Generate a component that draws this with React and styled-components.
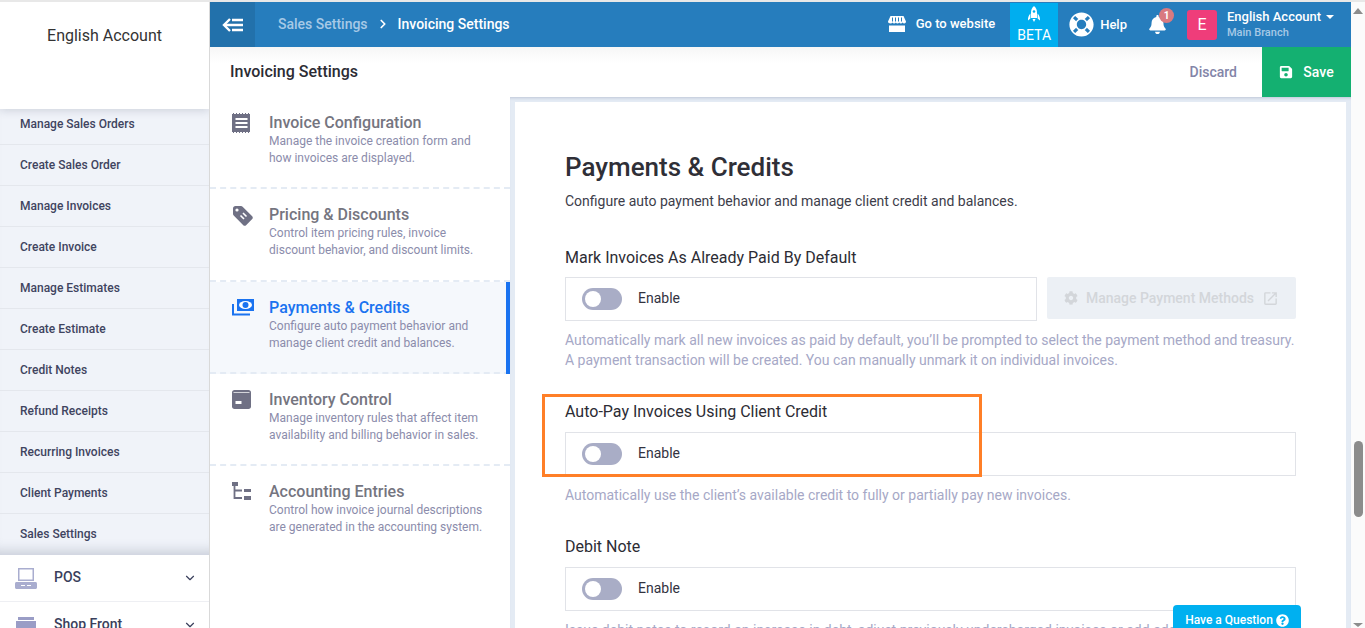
import React from "react";
import styled, { createGlobalStyle } from "styled-components";
import { FaBell, FaCog, FaLifeRing, FaQuestionCircle, FaSave } from "react-icons/fa";
import { FiChevronDown, FiChevronRight } from "react-icons/fi";
import { MdOpenInNew } from "react-icons/md";

const GlobalStyle = createGlobalStyle`
  html, body {
    margin: 0;
    padding: 0;
    height: 628px;
    overflow: hidden;
    background: #fff;
    font-family: Roboto, "Liberation Sans", sans-serif;
  }
  * { box-sizing: border-box; }
`;

const Page = styled.div`
  position: relative;
  display: flex;
  height: 628px;
  border-top: 2px solid #e8e8e8;
  overflow: hidden;
`;

/* left sidebar */
const Sidebar = styled.aside`
  flex: 0 0 210px;
  display: flex;
  flex-direction: column;
  border-right: 1px solid #d9d9d9;
  overflow: hidden;
`;

const AccountHeader = styled.div`
  position: relative;
  z-index: 1;
  flex: 0 0 107px;
  padding-top: 24px;
  background: #fff;
  box-shadow: 0 2px 8px rgba(60, 70, 100, 0.18);
  text-align: center;
  font-size: 16px;
  line-height: 20px;
  color: #333;
`;

const SubMenu = styled.ul`
  flex: 0 0 450px;
  margin: -6px 0 0;
  padding: 1px 0 0;
  list-style: none;
  background: #f0f3f9;
  box-shadow: inset 0 -14px 12px -10px rgba(60, 70, 100, 0.22);
`;

const SubMenuItem = styled.li`
  height: 41px;
  padding-left: 20px;
  border-bottom: 1px solid #e4e7ed;
  font-size: 12px;
  font-weight: 500;
  line-height: 41px;
  color: #3f4460;

  &:last-child {
    border-bottom: 0;
  }
`;

const MenuGroup = styled.div`
  flex: 0 0 47px;
  display: flex;
  align-items: center;
  padding: 0 12px 0 15px;
  background: #fff;
  border-bottom: 1px solid #eeeff3;
  font-size: 14px;
  font-weight: 500;
  color: #3a3f5c;

  span {
    flex: 1;
    margin: 0 0 2px 17px;
  }

  svg.chevron {
    font-size: 14px;
    color: #3a3f5c;
  }
`;

/* main column */
const Main = styled.main`
  flex: 1;
  min-width: 0;
  display: flex;
  flex-direction: column;
`;

const TopBar = styled.header`
  flex: 0 0 45px;
  display: flex;
  align-items: center;
  background: #267dbd;
  color: #fff;
`;

const BackButton = styled.div`
  flex: 0 0 45px;
  height: 100%;
  display: flex;
  align-items: center;
  justify-content: center;
  background: #2271ab;
`;

const Breadcrumb = styled.div`
  flex: 1;
  display: flex;
  align-items: center;
  padding: 0 0 2px 23px;
  font-size: 14px;
  font-weight: 500;
`;

const Crumb = styled.span`
  color: ${(p) => (p.$current ? "#ffffff" : "#a6c9e6")};
`;

const CrumbSep = styled(FiChevronRight)`
  margin: 0 8px;
  font-size: 14px;
  stroke-width: 3;
`;

const TopAction = styled.div`
  display: flex;
  align-items: center;
  font-size: 13px;
  font-weight: 500;
  color: #fff;
`;

const WebsiteAction = styled(TopAction)`
  gap: 10px;
  margin-right: 15px;
  padding-bottom: 2px;
`;

const HelpAction = styled(TopAction)`
  gap: 6px;
  margin: 0 21px 0 11px;
`;

const BetaBadge = styled.div`
  align-self: flex-end;
  width: 48px;
  height: 44px;
  display: flex;
  flex-direction: column;
  align-items: center;
  padding-top: 3px;
  background: #00aeef;
  font-size: 14px;
  line-height: 16px;
  color: #fff;

  svg {
    margin-bottom: 5px;
  }
`;

const Bell = styled.div`
  position: relative;
  display: flex;
  margin-right: 20px;
  font-size: 19px;
  color: #fff;
`;

const BellCount = styled.span`
  position: absolute;
  top: -7px;
  right: -7px;
  width: 15px;
  height: 15px;
  border-radius: 50%;
  background: #d97a80;
  font-size: 10px;
  font-weight: 700;
  line-height: 15px;
  text-align: center;
  color: #fff;
`;

const Avatar = styled.div`
  flex: 0 0 30px;
  height: 30px;
  margin-right: 10px;
  border-radius: 3px;
  background: #ef3d7a;
  font-size: 16px;
  line-height: 30px;
  text-align: center;
  color: #fff;
`;

const UserInfo = styled.div`
  width: 124px;
  font-weight: 500;
`;

const UserName = styled.div`
  font-size: 13px;
  line-height: 16px;
  color: #fff;

  &::after {
    content: "";
    display: inline-block;
    margin-left: 5px;
    vertical-align: 2px;
    border-left: 4px solid transparent;
    border-right: 4px solid transparent;
    border-top: 4px solid #fff;
  }
`;

const UserBranch = styled.div`
  font-size: 11px;
  line-height: 15px;
  color: #a6c9e6;
`;

const PageHeader = styled.div`
  flex: 0 0 50px;
  display: flex;
  align-items: center;
  padding-left: 20px;
  background: linear-gradient(#f6f6f6, #fff 16px);
`;

const PageTitle = styled.h1`
  flex: 1;
  margin: 0 0 2px;
  font-size: 16px;
  font-weight: 500;
  color: #2c2c34;
`;

const DiscardLink = styled.a`
  margin-right: 25px;
  font-size: 14px;
  font-weight: 500;
  color: #8385a8;
`;

const SaveButton = styled.button`
  width: 89px;
  height: 50px;
  display: flex;
  align-items: center;
  justify-content: center;
  gap: 10px;
  border: 0;
  background: #14b071;
  font-family: inherit;
  font-size: 14px;
  font-weight: 500;
  color: #fff;
`;

const Body = styled.div`
  flex: 1;
  min-height: 0;
  display: flex;
`;

/* settings nav */
const SettingsNav = styled.nav`
  flex: 0 0 300px;
`;

const NavItem = styled.div`
  position: relative;
  height: 92.3px;
  display: flex;
  padding: 16px 20px 0 22px;
  border-bottom: 2px dashed #e4ebf4;
  background: ${(p) => (p.$active ? "#f5f8fc" : "#fff")};

  &:last-child {
    border-bottom: 0;
  }

  ${(p) =>
    p.$active &&
    `&::after {
      content: "";
      position: absolute;
      top: 0;
      right: 0;
      bottom: -2px;
      width: 4px;
      background: #1a73f0;
    }`}
`;

const NavIcon = styled.div`
  flex: 0 0 37px;
  color: ${(p) => (p.$active ? "#1a73f0" : "#6f7084")};
`;

const NavTitle = styled.div`
  font-size: 16px;
  font-weight: 500;
  line-height: 20px;
  color: ${(p) => (p.$active ? "#1a73f0" : "#75757f")};
`;

const NavDesc = styled.div`
  font-size: 12px;
  line-height: 17px;
  color: #8b8cab;
`;

/* settings form */
const Panel = styled.section`
  flex: 1;
  min-width: 0;
  padding: 5px 5px 0;
  background: #e4ebf4;
  box-shadow: inset 0 3px 3px -2px rgba(80, 90, 130, 0.25);
`;

const Card = styled.div`
  height: 100%;
  overflow: hidden;
  padding: 50px 50px 0;
  background: #fff;
`;

const SectionTitle = styled.h2`
  margin: 0;
  font-size: 26px;
  font-weight: 500;
  line-height: 30px;
  color: #2f2f37;
`;

const SectionDesc = styled.p`
  margin: 9px 0 0;
  font-size: 14px;
  line-height: 20px;
  color: #3d3d4a;
`;

const Field = styled.div`
  margin-top: ${(p) => p.$gap}px;
`;

const FieldLabel = styled.div`
  margin-bottom: ${(p) => p.$gap}px;
  font-size: 16px;
  line-height: 20px;
  color: #2c2c34;
`;

const FieldRow = styled.div`
  display: flex;
  align-items: flex-start;
  gap: 10px;
`;

const ToggleBox = styled.div`
  flex: 1;
  height: 44px;
  display: flex;
  align-items: center;
  gap: 16px;
  padding-left: 16px;
  border: 1px solid #e1e3e8;
  font-size: 14px;
  color: #33333f;

  span:last-child {
    margin-bottom: 2px;
  }
`;

const Toggle = styled.i`
  position: relative;
  width: 40px;
  height: 22px;
  border-radius: 11px;
  background: #a9adc6;

  &::before {
    content: "";
    position: absolute;
    top: 3px;
    left: 3px;
    width: 16px;
    height: 16px;
    border-radius: 50%;
    background: #fff;
  }
`;

const DisabledButton = styled.div`
  flex: 0 0 249px;
  height: 42px;
  display: flex;
  align-items: center;
  justify-content: center;
  gap: 8px;
  border-radius: 2px;
  background: #ecf0f5;
  font-size: 14px;
  font-weight: 500;
  color: #d3d6da;
`;

const HelpText = styled.p`
  margin: 9px 0 0;
  font-size: 14px;
  line-height: 20px;
  color: #a6a8c6;
`;

/* fake scrollbar */
const ScrollTrack = styled.div`
  flex: 0 0 14px;
  display: flex;
  flex-direction: column;
  align-items: center;
  padding-top: 6px;
  background: #fbfbfb;
`;

const ScrollUp = styled.span`
  border-left: 5px solid transparent;
  border-right: 5px solid transparent;
  border-bottom: 6px solid #8c8c8c;
`;

const ScrollThumb = styled.span`
  width: 9px;
  height: 76px;
  margin-top: 427px;
  border-radius: 5px;
  background: #8c8c8c;
`;

const ScrollDown = styled.span`
  margin-top: auto;
  margin-bottom: 1px;
  border-left: 5px solid transparent;
  border-right: 5px solid transparent;
  border-top: 4px solid #8c8c8c;
`;

/* overlays */
const Highlight = styled.div`
  position: absolute;
  top: 392px;
  left: 542px;
  width: 440px;
  height: 83px;
  border: 3px solid #ff7f27;
  pointer-events: none;
`;

const QuestionTab = styled.div`
  position: absolute;
  right: 64px;
  bottom: -7px;
  width: 128px;
  height: 30px;
  display: flex;
  align-items: center;
  justify-content: center;
  gap: 3px;
  border-radius: 4px 4px 0 0;
  background: #00b0f0;
  font-size: 12px;
  font-weight: 500;
  color: #fff;
`;

/* drawn icons */
const BackIcon = () => (
  <svg width="22" height="14" viewBox="0 0 22 14" fill="none" stroke="#fff" strokeWidth="2.4">
    <path d="M8 1 2 7l6 6" />
    <path d="M2.500 7H21M10 2h11M10 12h11" />
  </svg>
);

const StoreIcon = () => (
  <svg width="18" height="16" viewBox="0 0 18 16" fill="#fff">
    <path d="M2.500 0h13L18 5.500c0 1.300-.8 2-1.800 2-.8 0-1.300-.4-1.600-1-.3.600-.9 1-1.700 1s-1.400-.4-1.700-1c-.3.600-.9 1-1.700 1s-1.400-.4-1.700-1c-.3.600-.9 1-1.700 1s-1.400-.4-1.700-1c-.3.600-.8 1-1.600 1C.8 7.500 0 6.800 0 5.500z" />
    <path d="M4.500 1.500v4M7.500 1.500v4M10.500 1.500v4M13.500 1.500v4" stroke="#267dbd" strokeWidth="1" />
    <path d="M1 9.500h16V16H1z" />
  </svg>
);

const RocketIcon = () => (
  <svg width="14" height="16" viewBox="0 0 14 16" fill="#fff">
    <path d="M7 0c2.200 1.800 3 4.200 3 6.500V12H4V6.500C4 4.200 4.800 1.800 7 0z" />
    <path d="M3.400 7.500V12.500L1 14.500c-.2-2.800.6-5 2.400-7zM10.600 7.500v5l2.400 2c.2-2.800-.6-5-2.400-7zM5.500 13h3L7 16z" />
    <circle cx="7" cy="5.500" r="1.300" fill="#00aeef" />
  </svg>
);

const InvoiceIcon = () => (
  <svg width="19" height="20" viewBox="0 0 19 20" fill="currentColor">
    <path d="M0 1h1V0h1v1h2V0h1v1h2V0h1v1h2V0h1v1h2V0h1v1h2V0h1v1h1v18h-1v1h-1v-1h-2v1h-1v-1h-2v1h-1v-1H8v1H7v-1H5v1H4v-1H2v1H1v-1H0z" />
    <path d="M3.500 5h12v2h-12zM3.500 9h12v2h-12zM3.500 13h12v2h-12z" fill="#fff" />
  </svg>
);

const TagIcon = () => (
  <svg width="22" height="22" viewBox="0 0 22 22">
    <path d="M1 3.500C1 2 2 1 3.500 1H9c.6 0 1.200.3 1.600.7l9.600 9.600c.8.8.8 2 0 2.800l-6.100 6.100c-.8.8-2 .8-2.800 0L1.700 10.600C1.300 10.200 1 9.600 1 9z" fill="#6f7084" />
    <circle cx="5" cy="5" r="1.600" fill="#fff" />
    <path d="M8.500 10.500l3.500 3.500M11 8l3.500 3.500" stroke="#fff" strokeWidth="1.600" />
  </svg>
);

const CashIcon = () => (
  <svg width="22" height="18" viewBox="0 0 22 18">
    <path d="M5 1h17v12H5z" fill="#1a73f0" />
    <ellipse cx="13.500" cy="7" rx="6.500" ry="4" fill="#fff" />
    <circle cx="13.500" cy="7" r="3" fill="#1a73f0" />
    <path d="M1 6v10.500h17" fill="none" stroke="#1a73f0" strokeWidth="2" />
  </svg>
);

const BoxIcon = () => (
  <svg width="19" height="19" viewBox="0 0 19 19" fill="currentColor">
    <path d="M2.500 0h14C18 0 19 1 19 2.500v14c0 1.500-1 2.500-2.500 2.500h-14C1 19 0 18 0 16.500v-14C0 1 1 0 2.500 0z" />
    <path d="M1.500 2.500h16" stroke="#fff" strokeWidth=".7" />
    <path d="M3.500 11h6v3h-6z" fill="#fff" />
  </svg>
);

const TreeIcon = () => (
  <svg width="19" height="18" viewBox="0 0 19 18" fill="currentColor">
    <path d="M0 0h6v4H0zM12 7h7v3h-7zM12 14h7v4h-7z" />
    <path d="M2.500 4v12H10M2.500 8.500H10" fill="none" stroke="currentColor" strokeWidth="1.800" />
  </svg>
);

const PosIcon = () => (
  <svg width="22" height="21" viewBox="0 0 22 21" fill="#a9adcf">
    <path fillRule="evenodd" d="M3 0h16v13H3zm1.500 1.500v10h13v-10z" />
    <path d="M1.500 14h19c.8 0 1.500.7 1.500 1.500v4c0 .8-.7 1.500-1.500 1.500h-19C.7 21 0 20.300 0 19.500v-4C0 14.700.7 14 1.500 14z" />
    <path d="M6 17.500h4M12 17.500h4" stroke="#fff" strokeWidth="1" />
  </svg>
);

const ShopIcon = () => (
  <svg width="22" height="17" viewBox="0 0 22 17" fill="#9a9dc6">
    <path d="M3 0h16v3H3zM1 4h20v8c0 .6-.4 1-1 1H2c-.6 0-1-.4-1-1zM2 13h2v4H2zM18 13h2v4h-2z" />
  </svg>
);

const subMenu = [
  "Manage Sales Orders",
  "Create Sales Order",
  "Manage Invoices",
  "Create Invoice",
  "Manage Estimates",
  "Create Estimate",
  "Credit Notes",
  "Refund Receipts",
  "Recurring Invoices",
  "Client Payments",
  "Sales Settings",
];

const navItems = [
  {
    title: "Invoice Configuration",
    lines: ["Manage the invoice creation form and", "how invoices are displayed."],
    icon: <InvoiceIcon />,
  },
  {
    title: "Pricing & Discounts",
    lines: ["Control item pricing rules, invoice", "discount behavior, and discount limits."],
    icon: <TagIcon />,
  },
  {
    title: "Payments & Credits",
    lines: ["Configure auto payment behavior and", "manage client credit and balances."],
    icon: <CashIcon />,
    active: true,
  },
  {
    title: "Inventory Control",
    lines: ["Manage inventory rules that affect item", "availability and billing behavior in sales."],
    icon: <BoxIcon />,
  },
  {
    title: "Accounting Entries",
    lines: ["Control how invoice journal descriptions", "are generated in the accounting system."],
    icon: <TreeIcon />,
  },
];

const App = () => {
  return (
    <>
      <GlobalStyle />
      <Page>
        <Sidebar>
          <AccountHeader>English Account</AccountHeader>
          <SubMenu>
            {subMenu.map((item) => (
              <SubMenuItem key={item}>{item}</SubMenuItem>
            ))}
          </SubMenu>
          <MenuGroup>
            <PosIcon />
            <span>POS</span>
            <FiChevronDown className="chevron" />
          </MenuGroup>
          <MenuGroup>
            <ShopIcon />
            <span>Shop Front</span>
            <FiChevronDown className="chevron" />
          </MenuGroup>
        </Sidebar>

        <Main>
          <TopBar>
            <BackButton>
              <BackIcon />
            </BackButton>
            <Breadcrumb>
              <Crumb>Sales Settings</Crumb>
              <CrumbSep />
              <Crumb $current>Invoicing Settings</Crumb>
            </Breadcrumb>
            <WebsiteAction>
              <StoreIcon />
              Go to website
            </WebsiteAction>
            <BetaBadge>
              <RocketIcon />
              BETA
            </BetaBadge>
            <HelpAction>
              <FaLifeRing size={25} />
              Help
            </HelpAction>
            <Bell>
              <FaBell />
              <BellCount>1</BellCount>
            </Bell>
            <Avatar>E</Avatar>
            <UserInfo>
              <UserName>English Account</UserName>
              <UserBranch>Main Branch</UserBranch>
            </UserInfo>
          </TopBar>

          <PageHeader>
            <PageTitle>Invoicing Settings</PageTitle>
            <DiscardLink>Discard</DiscardLink>
            <SaveButton>
              <FaSave size={14} />
              Save
            </SaveButton>
          </PageHeader>

          <Body>
            <SettingsNav>
              {navItems.map((item) => (
                <NavItem key={item.title} $active={item.active}>
                  <NavIcon $active={item.active}>{item.icon}</NavIcon>
                  <div>
                    <NavTitle $active={item.active}>{item.title}</NavTitle>
                    <NavDesc>
                      {item.lines[0]}
                      <br />
                      {item.lines[1]}
                    </NavDesc>
                  </div>
                </NavItem>
              ))}
            </SettingsNav>

            <Panel>
              <Card>
                <SectionTitle>Payments &amp; Credits</SectionTitle>
                <SectionDesc>
                  Configure auto payment behavior and manage client credit and balances.
                </SectionDesc>

                <Field $gap={37}>
                  <FieldLabel $gap={9}>Mark Invoices As Already Paid By Default</FieldLabel>
                  <FieldRow>
                    <ToggleBox>
                      <Toggle />
                      <span>Enable</span>
                    </ToggleBox>
                    <DisabledButton>
                      <FaCog size={14} />
                      Manage Payment Methods
                      <MdOpenInNew size={17} />
                    </DisabledButton>
                  </FieldRow>
                  <HelpText>
                    Automatically mark all new invoices as paid by default, you’ll be prompted to select the payment method and treasury.
                    <br />
                    A payment transaction will be created. You can manually unmark it on individual invoices.
                  </HelpText>
                </Field>

                <Field $gap={32}>
                  <FieldLabel $gap={10}>Auto-Pay Invoices Using Client Credit</FieldLabel>
                  <ToggleBox>
                    <Toggle />
                    <span>Enable</span>
                  </ToggleBox>
                  <HelpText>
                    Automatically use the client’s available credit to fully or partially pay new invoices.
                  </HelpText>
                </Field>

                <Field $gap={32}>
                  <FieldLabel $gap={10}>Debit Note</FieldLabel>
                  <ToggleBox>
                    <Toggle />
                    <span>Enable</span>
                  </ToggleBox>
                  <HelpText>
                    Issue debit notes to record an increase in debt, adjust previously undercharged invoices or add additional charges.
                  </HelpText>
                </Field>
              </Card>
            </Panel>
          </Body>
        </Main>

        <ScrollTrack>
          <ScrollUp />
          <ScrollThumb />
          <ScrollDown />
        </ScrollTrack>

        <Highlight />
        <QuestionTab>
          Have a Question
          <FaQuestionCircle size={13} />
        </QuestionTab>
      </Page>
    </>
  );
};

export default App;
